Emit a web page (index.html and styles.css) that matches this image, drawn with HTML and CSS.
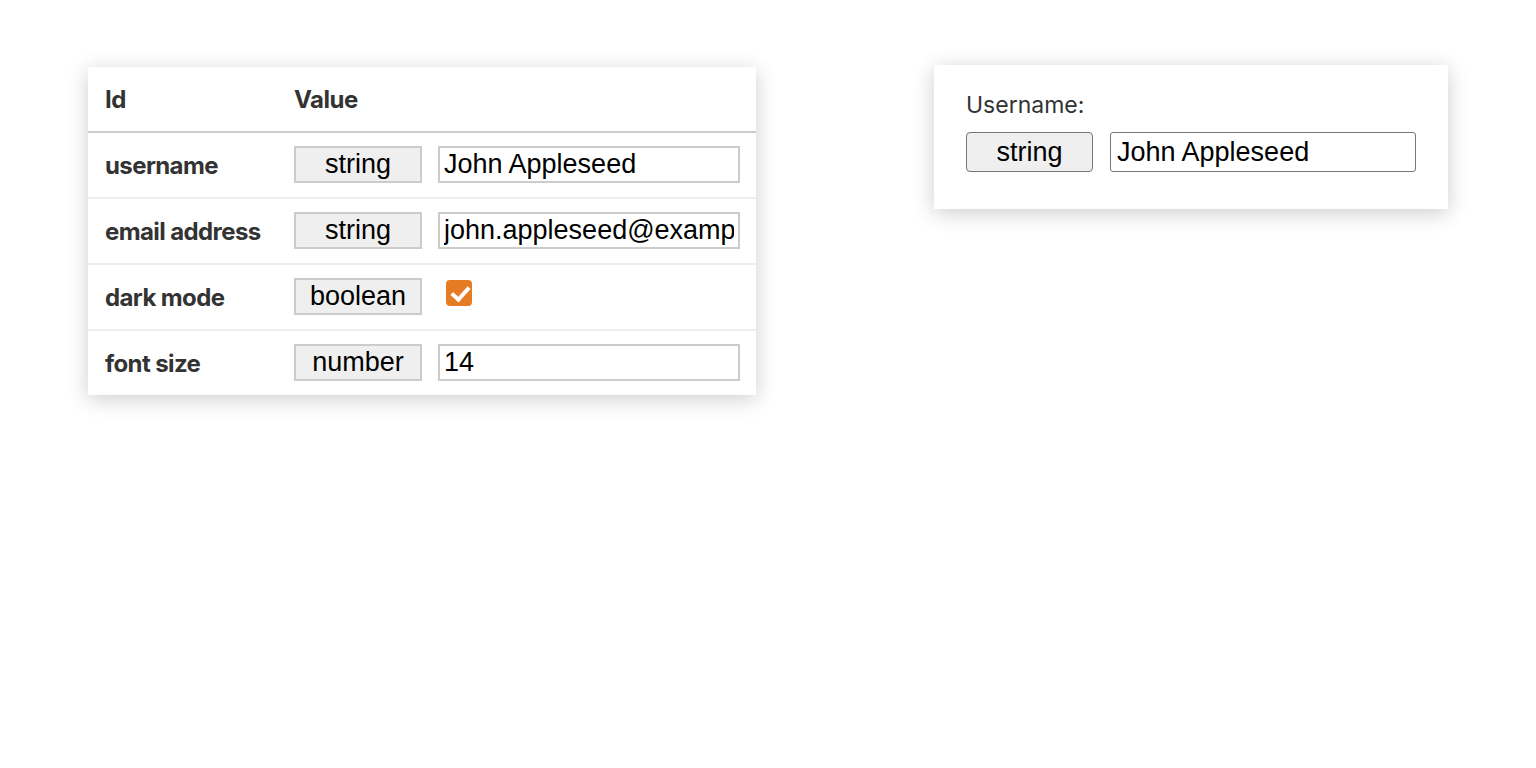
FILE: index.html
```html
<!DOCTYPE html>
<html>
<head>
<meta charset="utf-8">
<link rel="stylesheet" href="styles.css">
</head>
<body>
<div class="page">
  <div class="card table-card">
    <div class="row head">
      <div class="cell id">Id</div>
      <div class="cell value">Value</div>
    </div>
    <div class="row">
      <div class="cell id">username</div>
      <div class="cell value"><button class="type">string</button><input class="field" type="text" value="John Appleseed"></div>
    </div>
    <div class="row">
      <div class="cell id">email address</div>
      <div class="cell value"><button class="type">string</button><input class="field" type="text" value="john.appleseed@example.com"></div>
    </div>
    <div class="row">
      <div class="cell id">dark mode</div>
      <div class="cell value"><button class="type">boolean</button><span class="check-wrap"><input class="check" type="checkbox" checked></span></div>
    </div>
    <div class="row last">
      <div class="cell id">font size</div>
      <div class="cell value"><button class="type">number</button><input class="field" type="text" value="14"></div>
    </div>
  </div>
  <div class="card form-card">
    <label class="form-label">Username:</label>
    <div class="form-row">
      <button class="type2">string</button>
      <input class="field2" type="text" value="John Appleseed">
    </div>
  </div>
</div>
</body>
</html>
```
FILE: styles.css
```css
* { box-sizing: border-box; }
html, body { margin: 0; padding: 0; background: #fff; }
body { font-family: "Inter", "Liberation Sans", sans-serif; color: #333; }

.page {
  display: flex;
  align-items: flex-start;
  padding: 65px 0 40px 88px;
  gap: 178px;
}

.card {
  background: #fff;
  box-shadow: 0 4px 20px rgba(0, 0, 0, 0.2);
}

.table-card {
  width: 668px;
  margin-top: 2px;
}

.row {
  display: flex;
  align-items: center;
  height: 66px;
  padding: 0 16px 0 17px;
  border-bottom: 2px solid #eeeeee;
}
.row.head {
  height: 66px;
  border-bottom: 2px solid #cccccc;
}
.row.last { border-bottom: none; height: 64px; }

.cell.id {
  width: 189px;
  font-weight: 700;
  font-size: 24px;
  letter-spacing: -0.6px;
  color: #333;
}
.head .cell { font-size: 24px; font-weight: 700; letter-spacing: -0.5px; }

.cell.value {
  display: flex;
  align-items: center;
  gap: 16px;
  margin-top: -2px;
}
.head .cell.value { margin-top: 0; }

.type {
  width: 128px;
  height: 37px;
  margin: 0;
  padding: 0;
  background: #efefef;
  border: 2px solid #cccccc;
  border-radius: 0;
  font-family: "Liberation Sans", Arial, sans-serif;
  font-size: 27px;
  color: #000;
}

.field {
  width: 302px;
  height: 37px;
  margin: 0;
  padding: 0 4px;
  border: 2px solid #cccccc;
  border-radius: 0;
  font-family: "Liberation Sans", Arial, sans-serif;
  font-size: 27px;
  color: #000;
  outline: none;
}

.check-wrap {
  display: flex;
  padding-left: 8px;
  margin-top: -6px;
}
.check {
  appearance: none;
  -webkit-appearance: none;
  width: 26px;
  height: 26px;
  margin: 0;
  background: #e57c23;
  border-radius: 4px;
  position: relative;
}
.check::after {
  content: "";
  position: absolute;
  left: 9px;
  top: 3px;
  width: 7px;
  height: 14px;
  border: solid #fff;
  border-width: 0 4px 4px 0;
  transform: rotate(42deg);
}

.form-card {
  width: 514px;
  padding: 26px 32px 37px 32px;
}
.form-label {
  display: block;
  font-size: 23px;
  color: #333;
  line-height: 29px;
  margin-bottom: 12px;
}
.form-row {
  display: flex;
  gap: 17px;
}
.type2 {
  width: 127px;
  height: 40px;
  margin: 0;
  padding: 0;
  background: #efefef;
  border: 1px solid #767676;
  border-radius: 4px;
  font-family: "Liberation Sans", Arial, sans-serif;
  font-size: 27px;
  color: #000;
}
.field2 {
  width: 306px;
  height: 40px;
  margin: 0;
  padding: 0 6px;
  border: 1px solid #767676;
  border-radius: 3px;
  font-family: "Liberation Sans", Arial, sans-serif;
  font-size: 27px;
  color: #000;
  outline: none;
}
```
